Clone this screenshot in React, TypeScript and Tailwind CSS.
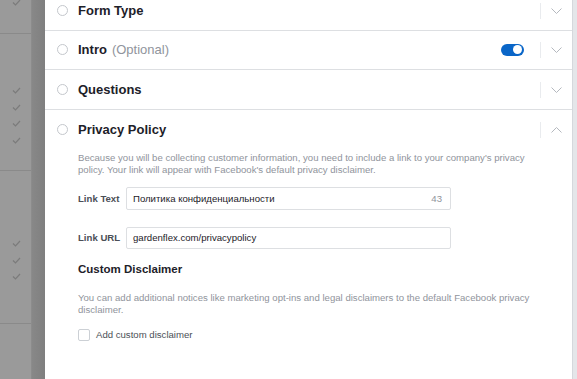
import React from 'react'

function Check() {
  return (
    <svg width="9" height="7" viewBox="0 0 9 7" className="block">
      <polyline points="1,3.5 3.5,6 8,1" fill="none" stroke="#7b7b7b" strokeWidth="1.2" />
    </svg>
  )
}

function Chevron({ up }: { up?: boolean }) {
  return (
    <svg width="11" height="6" viewBox="0 0 11 6" className="block">
      <polyline
        points={up ? '0.5,5.5 5.5,0.5 10.5,5.5' : '0.5,0.5 5.5,5.5 10.5,0.5'}
        fill="none"
        stroke="#b4b8be"
        strokeWidth="1"
      />
    </svg>
  )
}

function Radio() {
  return <span className="block w-[11px] h-[11px] rounded-full border border-[#c4c7cc] bg-white" />
}

function RowHead({
  title,
  extra,
  toggle,
  up,
}: {
  title: string
  extra?: string
  toggle?: boolean
  up?: boolean
}) {
  return (
    <div className="flex items-center h-[39px] pl-[12px]">
      <Radio />
      <span className="ml-[10px] text-[13px] font-bold text-[#1d2129]">{title}</span>
      {extra && <span className="ml-[5px] text-[13px] text-[#90949c]">{extra}</span>}
      <div className="flex-1" />
      {toggle && (
        <span className="flex items-center justify-end w-[23px] h-[12px] rounded-full bg-[#0a66c8] pr-[2px] mr-[16px]">
          <span className="block w-[9px] h-[9px] rounded-full bg-white" />
        </span>
      )}
      <span className="block w-px h-[16px] bg-[#e9ebee]" />
      <span className="w-[31px] flex justify-center">
        <Chevron up={up} />
      </span>
    </div>
  )
}

export default function App() {
  return (
    <div className="w-[577px] h-[379px] flex overflow-hidden bg-white font-['Liberation_Sans',Arial,sans-serif]">
      {/* dimmed page behind the dialog */}
      <div className="w-[45px] flex shrink-0">
        <div className="w-[32px] bg-[#9a9a9a] border-r border-[#8c8c8c] flex flex-col">
          <div className="h-[34px] border-b border-[#8a8a8a] flex flex-col items-end pr-[10px]">
            <div className="-mt-[1px]"><Check /></div>
          </div>
          <div className="h-[137px] border-b border-[#8a8a8a] flex flex-col items-end pr-[10px] pt-[53px] gap-[9.5px]">
            <Check />
            <Check />
            <Check />
            <Check />
          </div>
          <div className="h-[153px] border-b border-[#8a8a8a] flex flex-col items-end pr-[10px] pt-[69px] gap-[9.5px]">
            <Check />
            <Check />
            <Check />
          </div>
          <div className="flex-1" />
        </div>
        <div className="flex-1 bg-linear-to-r from-[#888888] to-[#7f7f7f]" />
      </div>

      {/* dialog */}
      <div className="flex-1 flex flex-col -mt-[9px]">
        <div className="border-b border-[#dddfe2]">
          <RowHead title="Form Type" />
        </div>
        <div className="border-b border-[#dddfe2] -mt-px">
          <RowHead title="Intro" extra="(Optional)" toggle />
        </div>
        <div className="border-b border-[#dddfe2]">
          <RowHead title="Questions" />
        </div>
        <div>
          <RowHead title="Privacy Policy" up />
          <div className="pl-[33px] pr-[40px] pt-[3px] text-[9.6px] leading-[12px]">
            <p className="text-[#90949c]">
              Because you will be collecting customer information, you need to include a link to your
              company's privacy policy. Your link will appear with Facebook's default privacy disclaimer.
            </p>
            <div className="flex items-center mt-[11px]">
              <span className="w-[48px] font-bold text-[#4b4f56]">Link Text</span>
              <div className="w-[325px] h-[23px] border border-[#dddfe2] rounded-[2px] flex items-center px-[6px]">
                <span className="flex-1 text-[#1d2129]">Политика конфиденциальности</span>
                <span className="text-[#90949c] pr-[2px]">43</span>
              </div>
            </div>
            <div className="flex items-center mt-[17px]">
              <span className="w-[48px] font-bold text-[#4b4f56]">Link URL</span>
              <div className="w-[325px] h-[22px] border border-[#dddfe2] rounded-[2px] flex items-center px-[6px]">
                <span className="text-[#1d2129]">gardenflex.com/privacypolicy</span>
              </div>
            </div>
            <h3 className="mt-[14px] text-[11.5px] font-bold text-[#1d2129]">Custom Disclaimer</h3>
            <p className="mt-[17px] text-[#90949c]">
              You can add additional notices like marketing opt-ins and legal disclaimers to the default
              Facebook privacy disclaimer.
            </p>
            <label className="flex items-center mt-[13px]">
              <span className="block w-[12px] h-[12px] border border-[#ccd0d5] rounded-[2px] bg-white" />
              <span className="ml-[6px] text-[#4b4f56]">Add custom disclaimer</span>
            </label>
          </div>
        </div>
      </div>

      {/* scrollbar edge */}
      <div className="w-[5px] shrink-0 bg-[#e4e6e9] border-l border-[#d5d8dc]" />
    </div>
  )
}
